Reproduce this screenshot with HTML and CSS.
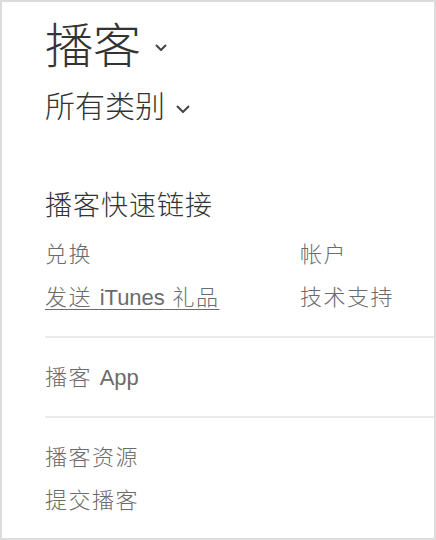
FILE: index.html
```html
<!DOCTYPE html>
<html lang="zh-CN">
<head>
<meta charset="utf-8">
<link rel="stylesheet" href="styles.css">
</head>
<body>
<div class="frame">
  <div class="title">播客<svg class="chev chev-lg" viewBox="0 0 12 7"><path d="M1 1 L6 6 L11 1" /></svg></div>
  <div class="subtitle">所有类别<svg class="chev chev-md" viewBox="0 0 14 8"><path d="M1 1 L7 7 L13 1" /></svg></div>
  <div class="heading">播客快速链接</div>
  <div class="links">
    <a class="link">兑换</a>
    <a class="link">帐户</a>
    <a class="link under">发送 <span class="latin">iTunes</span> 礼品</a>
    <a class="link">技术支持</a>
  </div>
  <div class="divider div-1"></div>
  <div class="section"><a class="link">播客 <span class="latin">App</span></a></div>
  <div class="divider div-2"></div>
  <div class="section list">
    <a class="link">播客资源</a>
    <a class="link">提交播客</a>
  </div>
</div>
</body>
</html>
```
FILE: styles.css
```css
html, body {
  margin: 0;
  padding: 0;
  background: #fff;
}
.frame {
  box-sizing: border-box;
  width: 436px;
  height: 540px;
  border: 2px solid #dcdcdc;
  padding: 17px 0 0 43px;
  font-family: "Liberation Sans", "Noto Sans CJK SC", sans-serif;
  font-weight: 300;
  color: #333;
}
.title {
  font-size: 48px;
  line-height: 56px;
  display: flex;
  align-items: center;
}
.chev {
  fill: none;
  stroke: #444;
  stroke-width: 2;
  flex: none;
}
.chev-lg {
  width: 12px;
  height: 7px;
  margin-left: 14px;
  margin-top: 1px;
}
.subtitle {
  font-size: 30px;
  line-height: 40px;
  margin-top: 12px;
  display: flex;
  align-items: center;
}
.chev-md {
  width: 14px;
  height: 8px;
  margin-left: 11px;
  margin-top: 3px;
}
.heading {
  font-size: 27px;
  line-height: 36px;
  letter-spacing: 1px;
  margin-top: 61px;
}
.links {
  display: grid;
  grid-template-columns: 255px auto;
  row-gap: 9px;
  margin-top: 14px;
}
.link {
  font-size: 22px;
  line-height: 34px;
  letter-spacing: 1.5px;
  color: #6b6b6b;
  text-decoration: none;
}
.latin {
  letter-spacing: 0;
}
.under {
  text-decoration: underline;
  text-decoration-thickness: 1px;
  text-underline-offset: 4px;
}
.divider {
  height: 2px;
  background: #ebebeb;
}
.div-1 {
  margin-top: 21px;
}
.div-2 {
  margin-top: 21px;
}
.section {
  padding-top: 23px;
}
.list {
  display: flex;
  flex-direction: column;
  row-gap: 9px;
}
```
